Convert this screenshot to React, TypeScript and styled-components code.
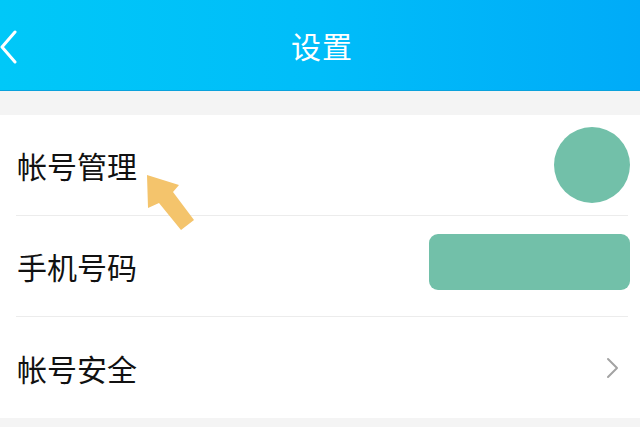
import styled, { createGlobalStyle } from "styled-components";

const GlobalStyle = createGlobalStyle`
  html, body {
    margin: 0;
    padding: 0;
    background: #f4f4f4;
    font-family: "Noto Sans CJK SC", "Noto Sans", sans-serif;
  }
`;

type Trailing = "avatar" | "phone" | "chevron";

const rows: { label: string; trailing: Trailing }[] = [
  { label: "帐号管理", trailing: "avatar" },
  { label: "手机号码", trailing: "phone" },
  { label: "帐号安全", trailing: "chevron" },
];

const BackIcon = () => (
  <svg width="20" height="34" viewBox="0 0 20 34">
    <path
      d="M15 2 L2 17 L15 32"
      fill="none"
      stroke="#ffffff"
      strokeWidth="3"
      strokeLinecap="round"
      strokeLinejoin="round"
    />
  </svg>
);

const ChevronIcon = () => (
  <svg width="14" height="22" viewBox="0 0 14 22">
    <path
      d="M2 2 L11 11 L2 20"
      fill="none"
      stroke="#a3a3a3"
      strokeWidth="2"
      strokeLinecap="round"
      strokeLinejoin="round"
    />
  </svg>
);

const PointerArrow = () => (
  <svg width="50" height="58" viewBox="0 0 50 58">
    <path
      d="M1 0 L33 10 L27 17 L48 45 L35 55 L13 28 L2 33 Z"
      fill="#f4c46c"
    />
  </svg>
);

export default function App() {
  return (
    <>
      <GlobalStyle />
      <Page>
        <Header>
          <BackButton>
            <BackIcon />
          </BackButton>
          <Title>设置</Title>
        </Header>
        <Spacer />
        <List>
          {rows.map((row, i) => (
            <Row key={row.label} $last={i === rows.length - 1}>
              <Label>{row.label}</Label>
              {row.trailing === "avatar" && <Avatar />}
              {row.trailing === "phone" && <PhoneMask />}
              {row.trailing === "chevron" && (
                <ChevronWrap>
                  <ChevronIcon />
                </ChevronWrap>
              )}
              {i === 0 && (
                <ArrowMark>
                  <PointerArrow />
                </ArrowMark>
              )}
            </Row>
          ))}
        </List>
      </Page>
    </>
  );
}

const Page = styled.div`
  width: 640px;
  height: 427px;
  overflow: hidden;
  background: #f4f4f4;
`;

const Header = styled.header`
  position: relative;
  height: 90px;
  display: flex;
  align-items: center;
  justify-content: center;
  background: linear-gradient(90deg, #00c8f8 0%, #00bdf9 50%, #00abf8 100%);
  border-bottom: 1px solid #0aa2dc;
`;

const BackButton = styled.div`
  position: absolute;
  left: 0;
  top: 30px;
  display: flex;
`;

const Title = styled.h1`
  margin: 0 0 0 4px;
  color: #ffffff;
  font-size: 30px;
  font-weight: 400;
  letter-spacing: 1px;
`;

const Spacer = styled.div`
  height: 24px;
  background: #f4f4f4;
`;

const List = styled.div`
  background: #ffffff;
  padding: 0 12px 0 16px;
`;

const Row = styled.div<{ $last: boolean }>`
  position: relative;
  display: flex;
  align-items: center;
  justify-content: space-between;
  border-bottom: ${(p) => (p.$last ? "none" : "1px solid #ececec")};
  height: ${(p) => (p.$last ? "101px" : "100px")};
`;

const Label = styled.span`
  color: #111111;
  font-size: 30px;
  line-height: 1;
  padding-left: 1px;
`;

const Avatar = styled.div`
  width: 76px;
  height: 76px;
  border-radius: 50%;
  background: #72c0a9;
  margin-right: -2px;
`;

const PhoneMask = styled.div`
  width: 201px;
  height: 56px;
  border-radius: 9px;
  background: #72c0a9;
  margin-right: -2px;
  margin-top: -8px;
`;

const ChevronWrap = styled.div`
  display: flex;
  margin-right: 8px;
`;

const ArrowMark = styled.div`
  position: absolute;
  left: 130px;
  top: 60px;
  display: flex;
`;
